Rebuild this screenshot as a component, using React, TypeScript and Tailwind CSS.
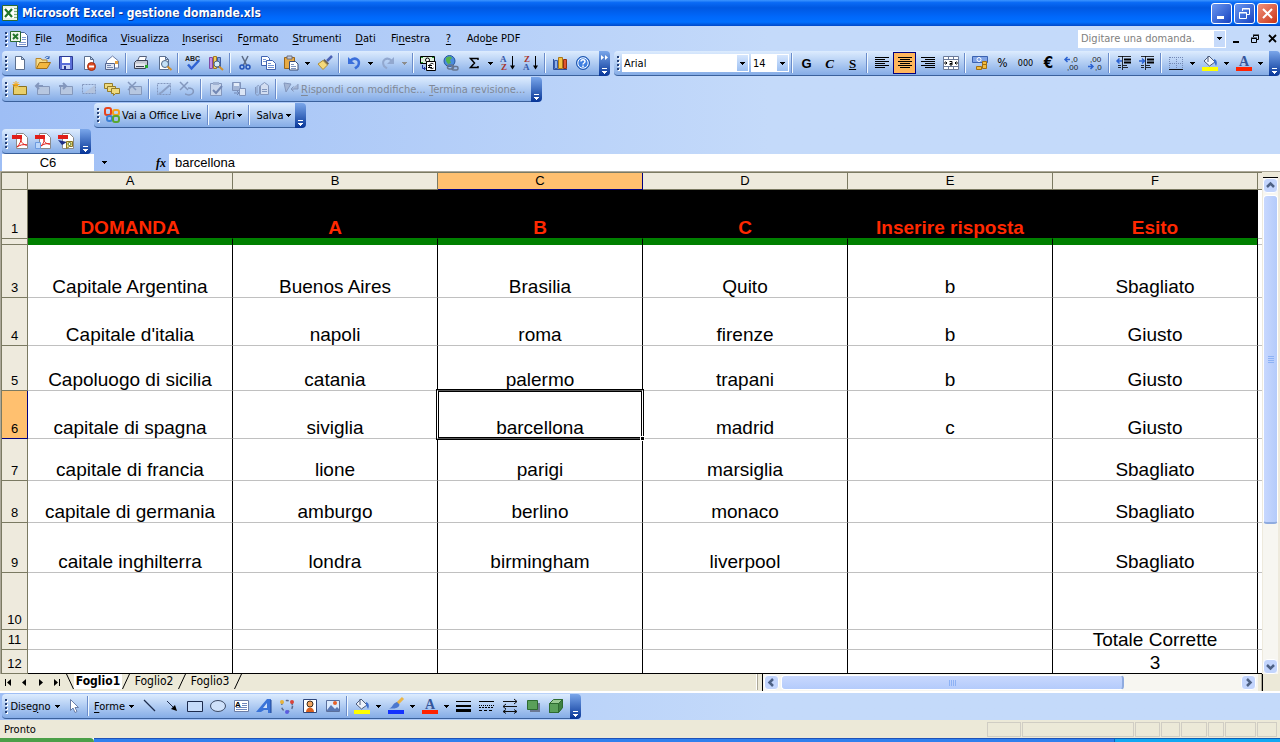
import type { ReactNode } from 'react';
import clsx from 'clsx';

const uiFont = "font-['DejaVu_Sans_Condensed','DejaVu_Sans','Noto_Sans',sans-serif]";
const cellFont = "font-['Liberation_Sans',Arial,sans-serif]";

/* ---------- icons ---------- */

function Svg({ children, w = 16, className }: { children: ReactNode; w?: number; className?: string }) {
  return (
    <svg width={w} height="16" viewBox={`0 0 ${w} 16`} fill="none" className={clsx('shrink-0 overflow-visible', className)} aria-hidden="true">
      {children}
    </svg>
  );
}

const page = <path d="M3.5 1.5h6l3 3v10h-9z M9.5 1.5v3h3" fill="#fff" stroke="#5b6f8f" />;
const folderNote = <path d="M1.500 4.500h4l1 1h8v8h-13z" fill="#e9cf6a" stroke="#8a7222" />;
const grayNote = <path d="M2.500 5.500h12v8h-12z" fill="#b7c7e0" stroke="#8598bb" />;

const icons: Record<string, ReactNode> = {
  new: <Svg>{page}</Svg>,
  open: (
    <Svg>
      <path d="M1 13.500V3.500h5l1 1.500h5v3" fill="#f7dd8a" stroke="#b8862b" />
      <path d="M1.500 13.500l3-6h11l-3.500 6z" fill="#f3b73e" stroke="#a36f17" />
      <path d="M10 3c1-2 3-2 4 0m0-2v2.500h-2.500" stroke="#3565b5" />
    </Svg>
  ),
  save: (
    <Svg>
      <path d="M1.500 1.500h13v13h-12l-1-1z" fill="#5b6fd8" stroke="#2b3a94" />
      <path d="M4 2h8v6H4z" fill="#fff" />
      <path d="M4 10h8v4H4z" fill="#c9d3f4" />
      <path d="M6 11h2v3H6z" fill="#26358c" />
    </Svg>
  ),
  permission: (
    <Svg>
      {page}
      <circle cx="10.500" cy="11.500" r="4" fill="#dd4b22" stroke="#a42c0c" />
      <path d="M8 11.500h5" stroke="#fff" strokeWidth="2" />
    </Svg>
  ),
  mail: (
    <Svg>
      <path d="M2.500 6l6-5 6 5v7h-12z" fill="#fff" stroke="#6f7fa6" />
      <path d="M1.500 8.500h9v6h-9z" fill="#dfe6f5" stroke="#53658f" />
      <path d="M3 10.500h4M3 12.500h6" stroke="#7788b0" />
      <path d="M11 6h3v3h-3z" fill="#e8a23c" />
    </Svg>
  ),
  print: (
    <Svg>
      <path d="M4.500 6l2-4.500h7L12 6" fill="#fff" stroke="#55617c" />
      <path d="M1.500 7.500l2-2h11v6l-2 2h-11z" fill="#c3c7d2" stroke="#3b4256" />
      <path d="M2 8.500h10v4H2z" fill="#e6e8ef" />
      <path d="M3 11.500h8" stroke="#3b4256" />
      <path d="M12 10h3v3h-3z" fill="#27a52f" />
    </Svg>
  ),
  preview: (
    <Svg>
      {page}
      <circle cx="9" cy="9" r="3.500" fill="#c4e1f7" stroke="#4d6484" />
      <path d="M11.500 11.500l4 3.500" stroke="#d2902a" strokeWidth="2" />
    </Svg>
  ),
  spell: (
    <Svg>
      <text x="0" y="6" fontSize="7" fontWeight="700" fill="#222" fontFamily="Liberation Sans, sans-serif">ABC</text>
      <path d="M3 9.500l3.500 4L14 5.500" stroke="#2f62d3" strokeWidth="2.500" />
    </Svg>
  ),
  research: (
    <Svg>
      <path d="M1.500 2.500h3v11h-3z" fill="#c58ee0" stroke="#7f4aa6" />
      <path d="M5.500 1.500h3v12h-3z" fill="#f0cf63" stroke="#a67b1c" />
      <path d="M9.500 2.500h3v10h-3z" fill="#7fa0dd" stroke="#3d5fa5" />
      <circle cx="9" cy="9" r="3" fill="#d5ebfa" stroke="#4d6484" />
      <path d="M11 11.500l4 3.500" stroke="#d2902a" strokeWidth="2" />
    </Svg>
  ),
  cut: (
    <Svg>
      <path d="M5 1l4.500 9M11 1L6.500 10" stroke="#5c6b85" strokeWidth="1.500" />
      <circle cx="5" cy="12" r="2" stroke="#2454b8" strokeWidth="1.500" />
      <circle cx="11" cy="12" r="2" stroke="#2454b8" strokeWidth="1.500" />
    </Svg>
  ),
  copy: (
    <Svg>
      <path d="M1.500 1.500h6l2 2v7h-8z" fill="#fff" stroke="#3f62b0" />
      <path d="M6.500 5.500h6l3 3v6h-9z" fill="#fff" stroke="#3f62b0" />
      <path d="M3 4.500h3M3 6.500h3M8 8.500h3M8 10.500h6M8 12.500h6" stroke="#7393d3" />
    </Svg>
  ),
  paste: (
    <Svg>
      <path d="M1.500 2.500h10v11h-10z" fill="#e8ab45" stroke="#99661a" />
      <path d="M4 1h5v3H4z" fill="#c9ccd6" stroke="#6a6f80" />
      <path d="M6.500 6.500h6l2.500 2.500v6h-8.500z" fill="#fff" stroke="#3c4d73" />
      <path d="M8 9.500h3M8 11.500h5M8 13.500h5" stroke="#7f93bd" />
    </Svg>
  ),
  brush: (
    <Svg>
      <path d="M15 1l-5 5" stroke="#4c62b5" strokeWidth="2.500" />
      <path d="M7.500 4l4.500 4.500-1.500 1.500L6 5.500z" fill="#6b6256" />
      <path d="M6 5.500L10.500 10 6 14.500 1 9z" fill="#f5d97a" stroke="#b18e35" />
    </Svg>
  ),
  undo: (
    <Svg>
      <path d="M4 6c5-5 11-1 8 5l-3 2.500" stroke="#3a6fdb" strokeWidth="2.500" />
      <path d="M2 2v7h7z" fill="#3a6fdb" />
    </Svg>
  ),
  redo: (
    <Svg>
      <path d="M12 6C7 1 1 5 4 11l3 2.500" stroke="#92a8cf" strokeWidth="2" />
      <path d="M14 2v7H7z" fill="#92a8cf" />
    </Svg>
  ),
  currency: (
    <Svg>
      <path d="M.5 1.500h14v7H.5z" fill="#dff0df" stroke="#000" />
      <circle cx="7.500" cy="5" r="2" fill="#fff" stroke="#000" />
      <path d="M1 2h2v1H1zM12 2h2v1h-2zM1 7h2v1H1z" fill="#269a2e" />
      <path d="M6.500 6.500h9v9h-9z" fill="#fff" stroke="#000" />
      <path d="M13.500 9c-2-1.500-4 0-4 2s2 3.500 4 2M8 10.500h4M8 12.500h4" stroke="#000" />
      <path d="M2.500 10v3.500H5M4 12l1.500 1.500L4 15" stroke="#2236a0" />
    </Svg>
  ),
  link: (
    <Svg>
      <circle cx="6.500" cy="6" r="5.500" fill="#4a8bdc" stroke="#27589f" />
      <path d="M3 3c2-2 5-2 6 0l-2 2 1 3-3 1-2-3z" fill="#55b34c" />
      <rect x="4.500" y="10" width="6" height="4" rx="2" stroke="#66758f" strokeWidth="1.500" />
      <rect x="9" y="11.500" width="6" height="3.500" rx="1.500" stroke="#66758f" strokeWidth="1.500" />
    </Svg>
  ),
  sum: (
    <Svg>
      <path d="M12 5V3.500H4.500L8.500 8l-4 4.500H12V11" stroke="#000" strokeWidth="1.500" />
    </Svg>
  ),
  sortAz: (
    <Svg>
      <text x="0" y="7" fontSize="9" fontWeight="700" fill="#3558a8" fontFamily="Liberation Serif, serif">A</text>
      <text x="1" y="15" fontSize="9" fontWeight="700" fill="#a8352c" fontFamily="Liberation Serif, serif">Z</text>
      <path d="M12.500 1v12" stroke="#000" />
      <path d="M10 10.500h5l-2.500 4z" fill="#000" />
    </Svg>
  ),
  sortZa: (
    <Svg>
      <text x="1" y="7" fontSize="9" fontWeight="700" fill="#a8352c" fontFamily="Liberation Serif, serif">Z</text>
      <text x="0" y="15" fontSize="9" fontWeight="700" fill="#3558a8" fontFamily="Liberation Serif, serif">A</text>
      <path d="M12.500 1v12" stroke="#000" />
      <path d="M10 10.500h5l-2.500 4z" fill="#000" />
    </Svg>
  ),
  chart: (
    <Svg>
      <path d="M1.500 4v10.500H15" stroke="#2c4f9e" />
      <path d="M2.500 5.500h3v8h-3z" fill="#8fb0ea" stroke="#3a5fae" />
      <path d="M6.500 2.500h4v11h-4z" fill="#f6c342" stroke="#a8771a" />
      <path d="M11.500 4.500h3v9h-3z" fill="#e0562f" stroke="#93300f" />
    </Svg>
  ),
  help: (
    <Svg>
      <circle cx="8" cy="8" r="6.500" fill="#3f7fe0" stroke="#2157ad" />
      <circle cx="8" cy="8" r="5.200" stroke="#fff" />
      <path d="M6 6.500c0-2.500 4-2.500 4 0 0 1.500-2 1.500-2 3M8 10.500v1.500" stroke="#fff" strokeWidth="1.500" />
    </Svg>
  ),
  left: <Svg><path d="M1 2.500h14M1 4.500h10M1 6.500h14M1 8.500h10M1 10.500h14M1 12.500h10" stroke="#000" /></Svg>,
  center: <Svg><path d="M1 2.500h14M3 4.500h10M1 6.500h14M3 8.500h10M1 10.500h14M3 12.500h10" stroke="#000" /></Svg>,
  right: <Svg><path d="M1 2.500h14M5 4.500h10M1 6.500h14M5 8.500h10M1 10.500h14M5 12.500h10" stroke="#000" /></Svg>,
  merge: (
    <Svg>
      <path d="M.5 1.500h15v13H.5z" fill="#fff" stroke="#6b7a99" />
      <path d="M1 4.500h14M1 11.500h14M5.500 2v2.500M10.500 2v2.500M5.500 12v2.500M10.500 12v2.500" stroke="#6b7a99" />
      <path d="M1 8h3M2.500 6.500L4 8 2.500 9.500M15 8h-3M13.500 6.500L12 8l1.500 1.500" stroke="#000" />
      <path d="M6.500 6.500h2.500v3.500H7V8.500h2" stroke="#000" />
    </Svg>
  ),
  money: (
    <Svg>
      <path d="M.5 1.500h15v6H.5z" fill="#7fa3e6" stroke="#3b62b0" />
      <circle cx="7" cy="4.500" r="2" stroke="#fff" />
      <path d="M10.500 6.500h4v7h-4zM4.500 11.500h5v3h-5z" fill="#f3bd3d" stroke="#a06e12" />
      <path d="M10.500 9.500h4" stroke="#a06e12" />
    </Svg>
  ),
  decInc: (
    <Svg>
      <path d="M1 4.500h5M3.500 2L1 4.500 3.500 7" stroke="#2b62d0" strokeWidth="1.500" />
      <text x="7" y="7" fontSize="8" fill="#222" fontFamily="Liberation Sans, sans-serif">,0</text>
      <text x="3" y="15" fontSize="8" fill="#222" fontFamily="Liberation Sans, sans-serif">,00</text>
    </Svg>
  ),
  decDec: (
    <Svg>
      <text x="3" y="7" fontSize="8" fill="#222" fontFamily="Liberation Sans, sans-serif">,00</text>
      <text x="8" y="15" fontSize="8" fill="#222" fontFamily="Liberation Sans, sans-serif">,0</text>
      <path d="M1 11.500h5M3.500 9L6 11.500 3.500 14" stroke="#2b62d0" strokeWidth="1.500" />
    </Svg>
  ),
  outdent: (
    <Svg>
      <path d="M2 1.500h13M2 12.500h3M7 12.500h5M7 10.500h4M2 10.500h3M6.500 1v14" stroke="#000" strokeWidth=".8" />
      <path d="M8 4.500h7M8 7.500h7" stroke="#000" strokeWidth="2" />
      <path d="M1 6h5M3.500 3.500L1 6l2.500 2.500" stroke="#2b62d0" strokeWidth="1.500" />
    </Svg>
  ),
  indent: (
    <Svg>
      <path d="M2 1.500h13M2 12.500h3M7 12.500h5M7 10.500h4M2 10.500h3M6.500 1v14" stroke="#000" strokeWidth=".8" />
      <path d="M8 4.500h7M8 7.500h7" stroke="#000" strokeWidth="2" />
      <path d="M0 6h5M3 3.500L5.500 6 3 8.500" stroke="#2b62d0" strokeWidth="1.500" />
    </Svg>
  ),
  borders: (
    <Svg>
      <path d="M1.500 2v12M8.500 2v12M14.500 2v12M2 2.500h13M2 8.500h13" stroke="#7489b5" strokeDasharray="1 1" />
      <path d="M1 14.500h14" stroke="#111" />
    </Svg>
  ),
  fill: (
    <Svg>
      <path d="M7 1l6 6-5.500 4L2 6z" fill="#eef3fb" stroke="#4c5c7c" />
      <path d="M6 1v6" stroke="#4c5c7c" />
      <path d="M12 4c3 1 3.500 4 2 7l-2-4z" fill="#3d6fce" />
      <path d="M0 12h16v4H0z" fill="#ffff00" />
    </Svg>
  ),
  fontColor: (
    <Svg>
      <text x="3" y="11" fontSize="14" fontWeight="700" fill="#35569c" fontFamily="Liberation Serif, serif">A</text>
      <path d="M0 12h16v4H0z" fill="#ff2200" />
    </Svg>
  ),
  penColor: (
    <Svg>
      <path d="M15 0L9 6" stroke="#eab547" strokeWidth="3" />
      <path d="M9 4l2.500 2.500C11 10 7 11 1 10.500c4-1 3-5 8-6.500z" fill="#4b78cf" />
      <path d="M0 12h16v4H0z" fill="#1432ff" />
    </Svg>
  ),
  noteNew: (
    <Svg>
      {folderNote}
      <path d="M4 0v7M.5 3.500h7M1.500 1l5 5M6.500 1l-5 5" stroke="#f4a81d" />
    </Svg>
  ),
  notePrev: <Svg>{grayNote}<path d="M1 5h7M4 2L1 5l3 3" stroke="#8397bd" strokeWidth="2" /></Svg>,
  noteNext: <Svg>{grayNote}<path d="M1 5h7M5 2l3 3-3 3" stroke="#8397bd" strokeWidth="2" /></Svg>,
  noteShow: <Svg><path d="M1.500 3.500h13v9h-13z" stroke="#8397bd" strokeDasharray="2 1" /><path d="M14 4v8H3z" fill="#b3c3dd" /></Svg>,
  notes: (
    <Svg>
      <path d="M.5 2.500h8v5h-8z" fill="#f0da7c" stroke="#937c2c" />
      <path d="M3.500 5.500h8v5h-8z" fill="#f0da7c" stroke="#937c2c" />
      <path d="M7.500 7.500h8v5h-4l-2 2v-2h-2z" fill="#f0da7c" stroke="#937c2c" />
    </Svg>
  ),
  noteDelete: <Svg>{grayNote}<path d="M1 1l8 8M9 1L1 9" stroke="#8397bd" strokeWidth="1.500" /></Svg>,
  ink: <Svg><path d="M1.500 2.500h13v11h-13z" stroke="#8397bd" strokeDasharray="2 1" /><path d="M14 4l-8 7-3 2" stroke="#8ba0c6" strokeWidth="2" /></Svg>,
  inkDelete: <Svg><path d="M1 1l8 8M9 1L1 9" stroke="#8397bd" strokeWidth="1.500" /><path d="M9 7c7 0 7 6 1 7-2 0-3-1-4-1" stroke="#8397bd" strokeWidth="1.500" /></Svg>,
  task: <Svg><path d="M2.500 2.500h11v12h-11z" fill="#c9d6ec" stroke="#8397bd" /><path d="M5 1h6v3H5z" fill="#9fb1d2" /><path d="M5 9l3 3 6-7" stroke="#7388b4" strokeWidth="2" /></Svg>,
  replace: <Svg><path d="M1.500 1.500h8v8h-8z" fill="#a3b5d6" stroke="#7f93bb" /><path d="M3 2h5v3H3z" fill="#e3ebf8" /><path d="M8.500 7.500h6v7h-6z" fill="#dbe5f5" stroke="#7f93bb" /><path d="M3 12h5M6 10l2 2-2 2" stroke="#7388b4" /></Svg>,
  attach: <Svg><path d="M6.500 4.500l4-3 4 3v9h-8z" fill="#d3def1" stroke="#8397bd" /><path d="M1.500 6v6c0 3 4 3 4 0V6c0-2-2.500-2-2.500 0v6" stroke="#8397bd" /><path d="M8 8.500h5M8 10.500h5" stroke="#8397bd" /></Svg>,
  reply: <Svg><path d="M1 2l7 1-5 8zM15 3v5H8M10.500 5.500L8 8l2.500 2.500" fill="#a3b4d3" stroke="#8397bd" /></Svg>,
  office: (
    <Svg>
      <rect x="1" y="1" width="6" height="7" rx="2" stroke="#e8421c" strokeWidth="2" />
      <rect x="9" y="3" width="6" height="5" rx="2" stroke="#f4a11a" strokeWidth="2" />
      <rect x="3" y="9" width="5" height="5" rx="2" stroke="#3b7fd6" strokeWidth="2" />
      <rect x="9" y="9" width="6" height="6" rx="2" stroke="#58a72e" strokeWidth="2" />
    </Svg>
  ),
  pdf: (
    <Svg>
      <path d="M4.500.5h7l4 4v11h-11z" fill="#fff" stroke="#8a8a8a" />
      <path d="M0 2h10v4H0z" fill="#e01f1a" />
      <path d="M5 14c3-3 4-6 4-8 0 4 3 6 6 6-4-1-7 0-10 2z" stroke="#e01f1a" />
    </Svg>
  ),
  pdfMail: (
    <Svg>
      <path d="M4.500.5h7l4 4v11h-11z" fill="#fff" stroke="#8a8a8a" />
      <path d="M0 2h10v4H0z" fill="#e01f1a" />
      <path d="M6 13c3-3 3-5 3-7 0 4 3 5 6 5-4-1-6 0-9 2z" stroke="#e01f1a" />
      <path d="M.5 9.500h5v6h-5z" fill="#bcd7fa" stroke="#6d9be0" />
    </Svg>
  ),
  pdfReview: (
    <Svg>
      <path d="M4.500.5h7l4 4v11h-11z" fill="#fff" stroke="#8a8a8a" />
      <path d="M0 2h10v4H0z" fill="#e01f1a" />
      <path d="M0 7l9 2-5 3z" fill="#1f2f86" />
      <path d="M8.500 8.500h6v5h-3l-3 2z" fill="#f4e48a" stroke="#8a7722" />
      <circle cx="11.500" cy="11" r="1.500" fill="#fff" stroke="#55702a" />
    </Svg>
  ),
  pointer: <Svg><path d="M4.500 1.500v11l2.500-2.500 2 4.500 2-1-2-4h3.500z" fill="#fff" stroke="#6a7ea8" /></Svg>,
  line: <Svg><path d="M3 2l11 11" stroke="#1c2b4d" strokeWidth="1.200" /></Svg>,
  arrow: <Svg><path d="M3 3l8 8" stroke="#1c2b4d" /><path d="M13 13l-2-6-4 4z" fill="#000" /></Svg>,
  rect: <Svg><path d="M.5 3.500h15v10H.5z" fill="#c6dcfa" stroke="#1c2b4d" /></Svg>,
  ellipse: <Svg><ellipse cx="8" cy="8" rx="7.500" ry="5.500" fill="#cfe1fa" stroke="#3c4a66" /></Svg>,
  textbox: (
    <Svg>
      <path d="M1.500 2.500h14v11h-14z" fill="#fff" stroke="#6b7da5" />
      <text x="2" y="9" fontSize="8" fontWeight="700" fill="#000" fontFamily="Liberation Sans, sans-serif">A</text>
      <path d="M9 5.500h5M9 7.500h5M3 9.500h11M3 11.500h11" stroke="#6e86bb" />
    </Svg>
  ),
  wordart: (
    <Svg>
      <path d="M11 1h4v14h-3v-3H8l-3 2H0z" fill="#3a73d8" />
      <path d="M11 5v5H7z" fill="#cfe1fa" />
      <path d="M15 2v13" stroke="#1f4593" />
    </Svg>
  ),
  diagram: (
    <Svg>
      <circle cx="8" cy="8" r="5.500" stroke="#5b6a8c" strokeDasharray="3 3" strokeWidth="1.500" />
      <circle cx="3" cy="4" r="2" fill="#e8b33a" />
      <circle cx="13" cy="4" r="2" fill="#d9443a" />
      <circle cx="8" cy="14" r="2" fill="#5b5be0" />
    </Svg>
  ),
  clipart: (
    <Svg>
      <path d="M1.500 1.500h13v13h-13z" fill="#fff" stroke="#2d4579" />
      <circle cx="8" cy="6" r="3" fill="#f3a560" stroke="#3b2c1c" />
      <path d="M4 14c0-6 8-6 8 0z" fill="#d9601f" />
    </Svg>
  ),
  picture: (
    <Svg>
      <path d="M1.500 2.500h13v11h-13z" fill="#dcebff" stroke="#5a6f9c" />
      <circle cx="10" cy="5" r="2" fill="#e8622a" />
      <path d="M2 12l4-5 4 4 2-2 2 2v2H2z" fill="#5a78b4" />
    </Svg>
  ),
  lineStyle: <Svg><path d="M0 3.500h15" stroke="#000" /><path d="M0 8h15" stroke="#000" strokeWidth="2" /><path d="M0 12.500h15" stroke="#000" strokeWidth="3" /></Svg>,
  dashStyle: (
    <Svg>
      <path d="M0 3.500h15" stroke="#000" />
      <path d="M0 7.500h15" stroke="#000" strokeDasharray="1 1" />
      <path d="M0 9.500h15" stroke="#000" strokeDasharray="2 1" />
      <path d="M0 12.500h15" stroke="#000" strokeDasharray="3 2" />
    </Svg>
  ),
  arrowStyle: (
    <Svg>
      <path d="M1 3.500h14M12 1l3 2.500L12 6M1 8.500h14M4 6L1 8.500 4 11M1 13.500h14M4 11.500l-3 2 3 2M12 11.500l3 2-3 2" stroke="#111" />
    </Svg>
  ),
  shadow: <Svg><path d="M5 5h10v9H5z" fill="#6b7894" /><path d="M2.500 2.500h10v9h-10z" fill="#5aa05a" stroke="#2d6b30" /></Svg>,
  cube: (
    <Svg>
      <path d="M1.500 5.500l4-4h9v8l-4 5h-9z" fill="#9acb94" stroke="#2d6b30" />
      <path d="M1.500 5.500h9v9h-9z" fill="#5aa05a" stroke="#2d6b30" />
      <path d="M10.500 5.500l4-4v8l-4 5z" fill="#3f8041" stroke="#2d6b30" />
    </Svg>
  ),
  excel: (
    <Svg>
      <path d="M.5.5h15v15H.5z" fill="#e9f3e6" stroke="#2c6a31" />
      <path d="M11 3.500h4M11 6.500h4M11 9.500h4M11 12.500h4" stroke="#7fae7c" />
      <path d="M2 3h10v10H2z" fill="#fff" />
      <path d="M3 4l7 8M10 4l-7 8" stroke="#23762b" strokeWidth="2.200" />
    </Svg>
  ),
  workbook: (
    <Svg w={18}>
      <path d="M8.500 1.500h6l3 3v11h-11v-12z" fill="#fff" stroke="#4a659c" />
      <path d="M12 6.500h4M12 8.500h4M9 11.500h7M9 13.500h7" stroke="#7d98d0" />
      <path d="M.5.5h10v10H.5z" fill="#eef6ec" stroke="#2c6a31" />
      <path d="M3 3l5 5M8 3L3 8" stroke="#23762b" strokeWidth="2" />
    </Svg>
  ),
};

/* ---------- toolbar pieces ---------- */

function Grip() {
  return (
    <svg width="6" height="16" viewBox="0 0 6 16" className="shrink-0" aria-hidden="true">
      {[1, 5, 9, 13].map((y) => (
        <g key={y}>
          <path d={`M4 ${y + 1}h2v2h-2z`} fill="#fff" />
          <path d={`M3 ${y}h2v2h-2z`} fill="#274176" />
        </g>
      ))}
    </svg>
  );
}

function Down({ color = '#000' }: { color?: string }) {
  return (
    <svg width="5" height="3" viewBox="0 0 5 3" shapeRendering="crispEdges" className="shrink-0" aria-hidden="true">
      <path d="M0 0h5v1H0zM1 1h3v1H1zM2 2h1v1H2z" fill={color} />
    </svg>
  );
}

function Sep() {
  return <span className="mx-0.5 h-5 w-0.5 shrink-0 border-l border-r border-l-[#6a8ccb] border-r-[#f1f9ff]" />;
}

function Tool({ icon, label, on, disabled, children }: { icon?: string; label: string; on?: boolean; disabled?: boolean; children?: ReactNode }) {
  return (
    <button
      aria-label={label}
      disabled={disabled}
      className={clsx('flex h-[22px] w-[23px] shrink-0 items-center justify-center', on && 'border border-[#000080] bg-[#ffb65c]')}
    >
      {icon ? icons[icon] : children}
    </button>
  );
}

function Drop({ label, gray }: { label: string; gray?: boolean }) {
  return (
    <button aria-label={label} className="flex h-[22px] w-[11px] shrink-0 items-center justify-center">
      <Down color={gray ? '#8d8d8d' : '#000'} />
    </button>
  );
}

// items: icon name, '|' for a separator, '>' for a drop-down arrow, '~' for a greyed one
function Tools({ items, disabled }: { items: string[]; disabled?: boolean }) {
  return items.map((it, i) => {
    if (it === '|') return <Sep key={i} />;
    if (it === '>' || it === '~') return <Drop key={i} label={`${items[i - 1]} opzioni`} gray={it === '~'} />;
    return <Tool key={i} icon={it} label={it} disabled={disabled} />;
  });
}

function Bar({ children, more, className }: { children: ReactNode; more?: boolean; className?: string }) {
  return (
    <div className={clsx('flex h-[25px] shrink-0', className)}>
      <div className="flex flex-1 items-center rounded-l-sm border-b border-[#3b619c] bg-linear-to-b from-[#ddecfe] to-[#85ace6] whitespace-nowrap">
        <Grip />
        {children}
      </div>
      <button
        aria-label="Opzioni barra degli strumenti"
        className="flex w-[11px] shrink-0 flex-col items-center justify-end gap-0.5 rounded-r-sm bg-linear-to-b from-[#7aa6ea] to-[#063497] pb-0.5"
      >
        {more && (
          <svg width="8" height="5" viewBox="0 0 8 5" className="mb-1.5" aria-hidden="true">
            <path d="M0 0l3 2.500L0 5zM4 0l3 2.500L4 5z" fill="#fff" />
          </svg>
        )}
        <span className="h-px w-[5px] bg-white" />
        <Down color="#fff" />
      </button>
    </div>
  );
}

function U({ text, at }: { text: string; at: number }) {
  return (
    <>
      {text.slice(0, at)}
      <span className="underline underline-offset-2">{text[at]}</span>
      {text.slice(at + 1)}
    </>
  );
}

/* ---------- window parts ---------- */

function TitleBar() {
  const box = 'flex size-[21px] items-center justify-center rounded-[3px] border border-white';
  return (
    <header className="flex h-[26px] items-center bg-[linear-gradient(#3c95ff,#0a6af5_10%,#0058e2_30%,#0068fb_65%,#0070ff_85%,#0048c8)] pr-0.5 pl-0.5">
      {icons.excel}
      <h1 className="ml-1 flex-1 text-[12px] font-bold text-white [text-shadow:1px_1px_#0a2f8a]">Microsoft Excel - gestione domande.xls</h1>
      <div className="flex gap-0.5">
        <button aria-label="Riduci a icona" className={clsx(box, 'bg-linear-to-br from-[#6c97f0] to-[#1941c0]')}>
          <svg width="13" height="13" viewBox="0 0 13 13"><path d="M2 9h7v3H2z" fill="#fff" /></svg>
        </button>
        <button aria-label="Ripristina" className={clsx(box, 'bg-linear-to-br from-[#6c97f0] to-[#1941c0]')}>
          <svg width="13" height="13" viewBox="0 0 13 13" fill="none" stroke="#fff"><path d="M4.500 4V1.500h7v6H9M4 2h8M1.500 5.500h7v6h-7zM1 6h8" /></svg>
        </button>
        <button aria-label="Chiudi" className={clsx(box, 'bg-linear-to-br from-[#f0907a] to-[#c8300c]')}>
          <svg width="13" height="13" viewBox="0 0 13 13" stroke="#fff" strokeWidth="2"><path d="M2 2l9 9M11 2l-9 9" /></svg>
        </button>
      </div>
    </header>
  );
}

const menus = [
  { text: 'File', at: 0, w: 'w-[31px]' },
  { text: 'Modifica', at: 0, w: 'w-14' },
  { text: 'Visualizza', at: 0, w: 'w-[60px]' },
  { text: 'Inserisci', at: 0, w: 'w-[55px]' },
  { text: 'Formato', at: 1, w: 'w-14' },
  { text: 'Strumenti', at: 0, w: 'w-[62px]' },
  { text: 'Dati', at: 0, w: 'w-[35px]' },
  { text: 'Finestra', at: 2, w: 'w-[55px]' },
  { text: '?', at: 0, w: 'w-[21px]' },
  { text: 'Adobe PDF', at: 3, w: 'w-[69px]' },
];

function MenuBar() {
  return (
    <nav className="flex h-[25px] items-center pl-0.5">
      <Grip />
      <span className="ml-0.5">{icons.workbook}</span>
      {menus.map((m) => (
        <button key={m.text} className={clsx('shrink-0 text-center whitespace-nowrap', m.w)}>
          <U text={m.text} at={m.at} />
        </button>
      ))}
      <div className="ml-auto flex h-[18px] w-[148px] border border-white bg-white">
        <input aria-label="Digitare una domanda" placeholder="Digitare una domanda." className="min-w-0 flex-1 pl-0.5 outline-none placeholder:text-[#808080]" />
        <button aria-label="Domande recenti" className="flex w-[11px] items-center justify-center bg-[#c6dafa]"><Down /></button>
      </div>
      <div className="ml-1.5 flex gap-2">
        <button aria-label="Riduci cartella"><svg width="10" height="10" viewBox="0 0 10 10"><path d="M1 7h6v2H1z" /></svg></button>
        <button aria-label="Ripristina cartella"><svg width="10" height="10" viewBox="0 0 10 10" fill="none" stroke="#000"><path d="M3.500 3V1.500h5v4H7M3 1h6M1.500 4.500h5v4h-5zM1 4h6" /></svg></button>
        <button aria-label="Chiudi cartella" className="mr-0.5"><svg width="10" height="10" viewBox="0 0 10 10" stroke="#000" strokeWidth="1.800"><path d="M1 1l7 7M8 1L1 8" /></svg></button>
      </div>
    </nav>
  );
}

function Combo({ label, value, className }: { label: string; value: string; className: string }) {
  return (
    <div className={clsx('relative h-[18px] shrink-0 bg-white', className)}>
      <select aria-label={label} className="h-full w-full appearance-none pl-0.5 outline-none">
        <option>{value}</option>
      </select>
      <span className="pointer-events-none absolute inset-y-px right-px flex w-[11px] items-center justify-center bg-linear-to-b from-[#d6e6fd] to-[#9dc0f2]">
        <Down />
      </span>
    </div>
  );
}

function Toolbars() {
  return (
    <div className="flex flex-col gap-px">
      <div className="flex gap-1 pl-0.5">
        <Bar more className="w-[608px]">
          <Tools
            items={['new', 'open', 'save', 'permission', 'mail', '|', 'print', 'preview', '|', 'spell', 'research', '|', 'cut', 'copy', 'paste', '>', 'brush', '|', 'undo', '>', 'redo', '~', '|', 'currency', 'link', 'sum', '>', 'sortAz', 'sortZa', '|', 'chart', 'help']}
          />
        </Bar>
        <Bar className="min-w-0 flex-1">
          <Combo label="Tipo di carattere" value="Arial" className="mr-0.5 ml-0.5 w-[127px]" />
          <Combo label="Dimensione carattere" value="14" className="w-[38px]" />
          <Sep />
          <Tool label="Grassetto"><b className="font-['Liberation_Sans',sans-serif] text-[13px] font-black">G</b></Tool>
          <Tool label="Corsivo"><i className="font-['Liberation_Serif',serif] text-[13px] font-semibold">C</i></Tool>
          <Tool label="Sottolineato"><span className="font-['Liberation_Serif',serif] text-[13px] font-bold underline">S</span></Tool>
          <Sep />
          <Tool icon="left" label="Allinea a sinistra" />
          <Tool icon="center" label="Centra" on />
          <Tool icon="right" label="Allinea a destra" />
          <Tool icon="merge" label="Unisci e centra" />
          <Sep />
          <Tool icon="money" label="Valuta" />
          <Tool label="Stile percentuale"><span className="text-[12px]">%</span></Tool>
          <Tool label="Stile separatore"><span className="text-[9px]">000</span></Tool>
          <Tool label="Euro"><b className="text-[15px]">€</b></Tool>
          <Tools items={['decInc', 'decDec', '|', 'outdent', 'indent', '|', 'borders', '>', 'fill', '>', 'fontColor', '>']} />
        </Bar>
      </div>

      <div className="flex pl-0.5">
        <Bar className="w-[540px]">
          <Tools items={['noteNew', 'notePrev', 'noteNext', 'noteShow', 'notes', 'noteDelete', '|', 'ink', 'inkDelete', '|', 'task', 'replace', 'attach', '|']} />
          <button disabled className="flex w-[142px] items-center gap-0.5 text-[#808896]">
            <span className="ml-1">{icons.reply}</span>
            <span><U text="Rispondi con modifiche..." at={0} /></span>
          </button>
          <button disabled className="ml-2 text-[#808896]"><U text="Termina revisione..." at={0} /></button>
        </Bar>
      </div>

      <div className="flex pl-[94px]">
        <Bar className="w-[212px]">
          <button className="flex w-[105px] items-center gap-0.5 pl-1">{icons.office}<span>Vai a Office Live</span></button>
          <Sep />
          <button className="flex w-[35px] items-center justify-center gap-0.5">Apri<Down /></button>
          <Sep />
          <button className="flex w-[43px] items-center justify-center gap-0.5">Salva<Down /></button>
        </Bar>
      </div>

      <div className="flex pl-0.5">
        <Bar className="w-[89px]">
          <Tools items={['pdf', 'pdfMail', 'pdfReview']} />
        </Bar>
      </div>
    </div>
  );
}

function FormulaBar() {
  return (
    <div className={clsx('flex h-[17px] text-[13px]', cellFont)}>
      <input aria-label="Casella nome" defaultValue="C6" className="ml-0.5 w-[92px] bg-white text-center outline-none" />
      <button aria-label="Elenco nomi" className="flex w-5 items-center justify-center"><Down /></button>
      <button className="ml-auto w-4 text-center font-['Liberation_Serif',serif] text-[12px] leading-none font-bold italic">fx</button>
      <input aria-label="Barra della formula" defaultValue="barcellona" className="w-[86.8%] bg-white pl-1.5 outline-none" />
    </div>
  );
}

/* ---------- sheet ---------- */

const columns = ['A', 'B', 'C', 'D', 'E', 'F'];

const rows: { n: number; h: string; cells: string[] }[] = [
  { n: 3, h: 'h-[53px]', cells: ['Capitale Argentina', 'Buenos Aires', 'Brasilia', 'Quito', 'b', 'Sbagliato'] },
  { n: 4, h: 'h-12', cells: ["Capitale d'italia", 'napoli', 'roma', 'firenze', 'b', 'Giusto'] },
  { n: 5, h: 'h-[45px]', cells: ['Capoluogo di sicilia', 'catania', 'palermo', 'trapani', 'b', 'Giusto'] },
  { n: 6, h: 'h-12', cells: ['capitale di spagna', 'siviglia', 'barcellona', 'madrid', 'c', 'Giusto'] },
  { n: 7, h: 'h-[42px]', cells: ['capitale di francia', 'lione', 'parigi', 'marsiglia', '', 'Sbagliato'] },
  { n: 8, h: 'h-[42px]', cells: ['capitale di germania', 'amburgo', 'berlino', 'monaco', '', 'Sbagliato'] },
  { n: 9, h: 'h-[50px]', cells: ['caitale inghilterra', 'londra', 'birmingham', 'liverpool', '', 'Sbagliato'] },
  { n: 10, h: 'h-[57px]', cells: ['', '', '', '', '', ''] },
  { n: 11, h: 'h-5', cells: ['', '', '', '', '', 'Totale Corrette'] },
  { n: 12, h: 'h-6', cells: ['', '', '', '', '', '3'] },
];

const head = 'border-r border-b border-[#7b7a62] bg-[#eeeadd] p-0 text-[13px] leading-4 font-normal';

function Sheet() {
  return (
    <table className={clsx('w-full table-fixed border-separate border-spacing-0 border-t border-l border-[#7b7a62] bg-white text-center', cellFont)}>
      <colgroup>
        <col className="w-[26px]" />
        {columns.map((c) => <col key={c} />)}
        <col className="w-1" />
      </colgroup>
      <thead>
        <tr className="h-[17px]">
          <th className={head} aria-label="Seleziona tutto" />
          {columns.map((c) => (
            <th key={c} scope="col" className={clsx(head, c === 'C' && 'border-[#000080] bg-[#ffc06f]')}>{c}</th>
          ))}
          <th className="border-b border-[#7b7a62] bg-[#eeeadd] p-0" />
        </tr>
      </thead>
      <tbody>
        <tr className="h-[49px]">
          <th scope="row" className={clsx(head, 'pb-px align-bottom')}>1</th>
          {['DOMANDA', 'A', 'B', 'C', 'Inserire risposta', 'Esito'].map((t) => (
            <td key={t} className="border-r border-b border-r-black border-b-[#008000] bg-black p-0 align-bottom text-[19px] leading-[21px] font-bold text-[#ff2800]">{t}</td>
          ))}
          <td className="border-b border-[#c0c0c0] p-0" />
        </tr>
        <tr className="h-1.5">
          <th scope="row" className={clsx(head, 'leading-none')} />
          {columns.map((c) => <td key={c} className="border-r border-black bg-[#008000] p-0" />)}
          <td className="border-b border-[#c0c0c0] p-0" />
        </tr>
        {rows.map((r) => (
          <tr key={r.n} className={r.h}>
            <th scope="row" className={clsx(head, 'pb-px align-bottom', r.n === 6 && 'border-[#000080] bg-[#ffc06f]')}>{r.n}</th>
            {r.cells.map((t, i) => {
              const active = r.n === 6 && i === 2;
              return (
                <td
                  key={i}
                  className={clsx(
                    'border-r border-b border-r-black p-0 align-bottom text-[19px]',
                    r.n === 11 ? 'leading-[19px]' : 'leading-[21px]',
                    r.n === 12 ? 'border-b-black' : 'border-b-[#c0c0c0]',
                    active && 'relative',
                  )}
                >
                  {t}
                  {active && (
                    <>
                      <span className="pointer-events-none absolute -inset-0.5 border-[3px] border-black" />
                      <span className="pointer-events-none absolute -inset-px border border-x-white border-y-[#555]" />
                      <span className="absolute -right-[3px] -bottom-[3px] size-[5px] border border-white bg-black" />
                    </>
                  )}
                </td>
              );
            })}
            <td className={clsx('border-b p-0', r.n === 12 ? 'border-black' : 'border-[#c0c0c0]')} />
          </tr>
        ))}
      </tbody>
    </table>
  );
}

const arrows = {
  up: 'M2 7l3.500-3.500L9 7',
  down: 'M2 4l3.500 3.500L9 4',
  left: 'M7 2L3.500 5.500 7 9',
  right: 'M4 2l3.500 3.500L4 9',
};

function ScrollButton({ dir, label }: { dir: keyof typeof arrows; label: string }) {
  return (
    <button aria-label={label} className="flex size-[15px] shrink-0 items-center justify-center rounded-sm border border-white bg-[#c3d5fd]">
      <svg width="11" height="11" viewBox="0 0 11 11" fill="none" stroke="#4d6185" strokeWidth="2.500"><path d={arrows[dir]} /></svg>
    </button>
  );
}

function VerticalScroll() {
  return (
    <div className="flex w-[18px] shrink-0 flex-col items-center border-r-2 border-l border-[#eeeadd] bg-[#f7f6f1]">
      <span className="h-1.5 w-full border-b border-black bg-[#ece9d8]" />
      <ScrollButton dir="up" label="Scorri in alto" />
      <div className="w-full flex-1 pt-0.5">
        <div className="flex h-[71%] w-full items-center justify-center rounded-sm border border-b-2 border-white border-b-[#8fabdf] bg-linear-to-r from-[#c8d8fe] to-[#b4cbfb]">
          <span className="flex flex-col gap-px">
            {[0, 1, 2, 3].map((i) => <span key={i} className="h-px w-1.5 bg-[#8db2f5]" />)}
          </span>
        </div>
      </div>
      <ScrollButton dir="down" label="Scorri in basso" />
    </div>
  );
}

const tabArrows = [
  ['Primo foglio', 'M0 0h1v7H0zM6 0v7L2 3.500z'],
  ['Foglio precedente', 'M5 0v7L1 3.500z'],
  ['Foglio successivo', 'M2 0v7l4-3.500z'],
  ['Ultimo foglio', 'M1 0v7l4-3.500zM6 0h1v7H6z'],
];

function Slash({ back }: { back?: boolean }) {
  return (
    <svg width="8" height="15" viewBox="0 0 8 15" fill="none" stroke="#000" className="shrink-0" aria-hidden="true">
      <path d={back ? 'M.5 0l7 15' : 'M7.500 0l-7 15'} />
    </svg>
  );
}

function SheetTabs() {
  const tab = 'h-[15px] w-12 text-center text-[12px] leading-[15px] whitespace-nowrap';
  return (
    <div className="flex h-[17px] bg-[#ece9d8]">
      <div className="flex w-[59.6%] border-r border-black">
        {tabArrows.map(([label, d]) => (
          <button key={label} aria-label={label} className="flex w-4 shrink-0 items-center justify-center">
            <svg width="7" height="7" viewBox="0 0 7 7"><path d={d} /></svg>
          </button>
        ))}
        <div role="tablist" className="ml-0.5 flex">
          <Slash back />
          <button role="tab" aria-selected="true" className={clsx(tab, 'bg-white font-bold')}>Foglio1</button>
          <Slash />
          <button role="tab" aria-selected="false" className={tab}>Foglio2</button>
          <Slash />
          <button role="tab" aria-selected="false" className={tab}>Foglio3</button>
          <Slash />
        </div>
        <span className="mr-1 ml-auto h-4 w-0.5 border-r border-[#aca899] bg-white" />
      </div>
      <div className="flex flex-1 items-center gap-0.5 border-r border-black bg-[#f7f6f1] pl-px">
        <ScrollButton dir="left" label="Scorri a sinistra" />
        <div className="h-[15px] flex-1">
          <div className="flex h-full w-3/4 items-center justify-center gap-px rounded-sm border border-r-2 border-white border-r-[#8fabdf] bg-linear-to-b from-[#c8d8fe] to-[#b4cbfb]">
            {[0, 1, 2, 3].map((i) => <span key={i} className="h-1.5 w-px bg-[#8db2f5]" />)}
          </div>
        </div>
        <ScrollButton dir="right" label="Scorri a destra" />
        <span className="h-full w-1 border-r border-[#aca899] bg-[#ece9d8]" />
      </div>
      <span className="w-[17px]" />
    </div>
  );
}

function DrawingBar() {
  return (
    <div className="flex border-t-2 border-white bg-linear-to-r from-[#9ebef5] to-[#c4dafa] to-60% py-px pl-0.5">
      <Bar className="w-[579px]">
        <button className="flex w-[54px] items-center justify-center gap-1"><span><U text="Disegno" at={4} /></span><Down /></button>
        <Tools items={['pointer', '|']} />
        <button className="flex w-[46px] items-center justify-center gap-1"><span><U text="Forme" at={0} /></span><Down /></button>
        <Tools
          items={['line', 'arrow', 'rect', 'ellipse', 'textbox', 'wordart', 'diagram', 'clipart', 'picture', '|', 'fill', '>', 'penColor', '>', 'fontColor', '>', 'lineStyle', 'dashStyle', 'arrowStyle', 'shadow', 'cube']}
        />
      </Bar>
    </div>
  );
}

const panes = ['w-[34px]', 'w-28', 'w-[25px]', 'w-[19px]', 'w-[26px]', 'w-4', 'w-[31px]', 'w-5'];

function StatusBar() {
  return (
    <footer>
      <div className="flex h-[18px] items-center justify-end gap-px bg-[#ece9d8] pr-[3px] pl-1">
        <span className="mr-auto">Pronto</span>
        {panes.map((w, i) => <span key={i} className={clsx('h-[15px] border border-[#d0cdc4]', w)} />)}
      </div>
      <div className="flex h-1">
        <span className="w-[94px] rounded-tr-sm bg-[#4b9f48]" />
        <span className="flex-1 border-t border-[#1f52b8] bg-[#2f80ee]" />
        <span className="w-[13%] border-t border-l border-[#0f5fb4] bg-[#11a8f2]" />
      </div>
    </footer>
  );
}

export default function App() {
  return (
    <div className={clsx('w-full overflow-hidden text-[11px] leading-[13px] text-black', uiFont)}>
      <TitleBar />
      <div className="bg-linear-to-r from-[#9ebef5] to-[#c4dafa] to-60%">
        <MenuBar />
        <Toolbars />
        <FormulaBar />
      </div>
      <main>
        <div className="flex border-t border-l border-[#aca899]">
          <div className="min-w-0 flex-1"><Sheet /></div>
          <VerticalScroll />
        </div>
        <SheetTabs />
      </main>
      <DrawingBar />
      <StatusBar />
    </div>
  );
}
